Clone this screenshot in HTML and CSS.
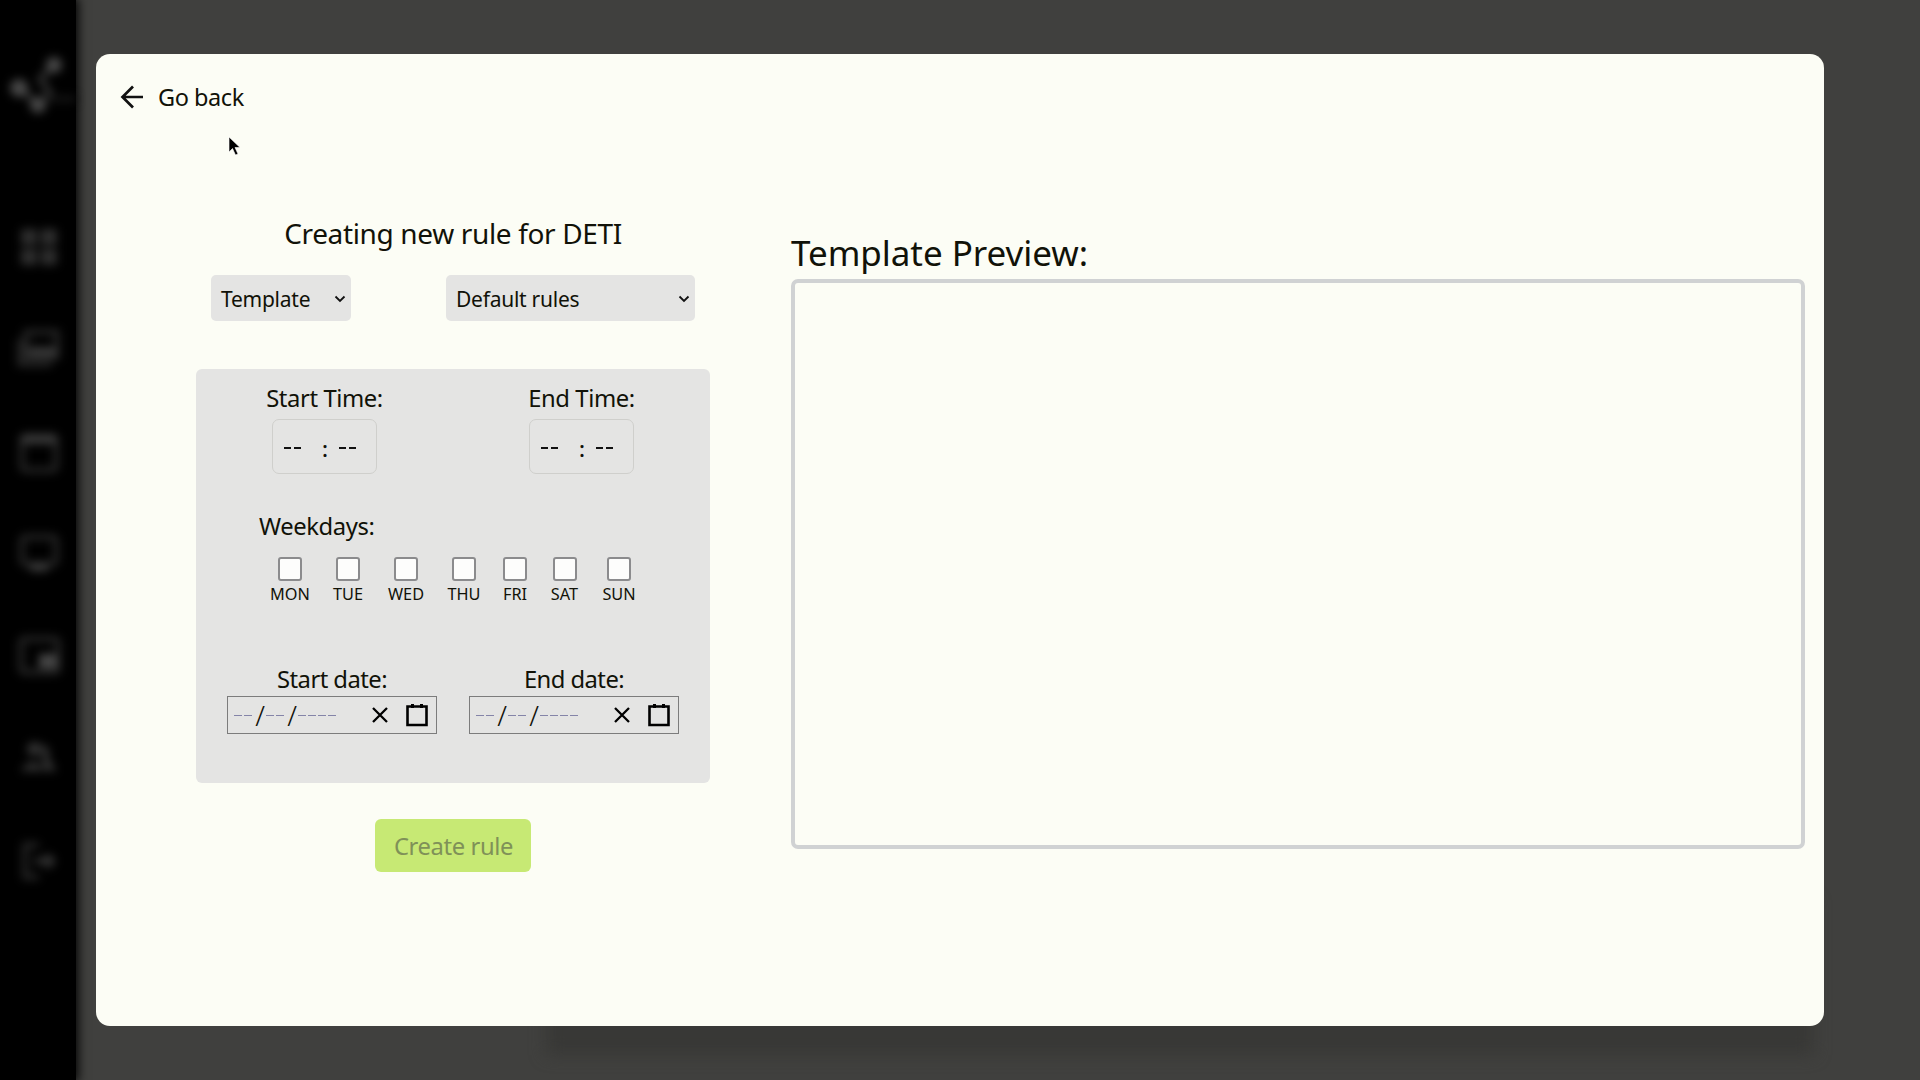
FILE: index.html
```html
<!DOCTYPE html>
<html lang="en">
<head>
<meta charset="utf-8">
<title>Create rule</title>
<link rel="stylesheet" href="styles.css">
</head>
<body>
<div class="app">
  <nav class="sidebar">
    <svg class="logo" viewBox="0 0 80 80"><g stroke="#303030" stroke-width="6"><path d="M20 37L38 54L50 42L40 28L54 14" fill="none"/><path d="M45 48H76" stroke="#151515"/></g><g fill="#484848"><circle cx="19" cy="37" r="9"/><circle cx="54" cy="14" r="8"/><circle cx="38" cy="54" r="8"/></g></svg>
    <svg class="nav-icon" viewBox="0 0 44 44"><path d="M4 4h16v16H4zM24 4h16v16H24zM4 24h16v16H4zM24 24h16v16H24z" fill="#2e2e2e"/></svg>
    <svg class="nav-icon" viewBox="0 0 44 44"><path d="M3 12v25h32M9 5h31v25H9z" fill="none" stroke="#2b2b2b" stroke-width="5"/><path d="M12 20h26v8H12z" fill="#3a3a3a"/></svg>
    <svg class="nav-icon" viewBox="0 0 44 44"><rect x="5" y="6" width="34" height="34" rx="3" fill="none" stroke="#2b2b2b" stroke-width="5"/><path d="M5 5h34v9H5z" fill="#3a3a3a"/></svg>
    <svg class="nav-icon" viewBox="0 0 44 44"><rect x="5" y="5" width="34" height="27" rx="3" fill="none" stroke="#2b2b2b" stroke-width="5"/><path d="M13 32h18v7H13z" fill="#404040"/></svg>
    <svg class="nav-icon" viewBox="0 0 44 44"><rect x="4" y="5" width="37" height="33" rx="3" fill="none" stroke="#2b2b2b" stroke-width="5"/><path d="M22 20h17v14H22z" fill="#484848"/></svg>
    <svg class="nav-icon" viewBox="0 0 44 44"><circle cx="17" cy="13" r="7" fill="#333"/><path d="M3 35q14-18 24 0zM24 8q12 4 7 13l9 14H27z" fill="#333"/></svg>
    <svg class="nav-icon" viewBox="0 0 44 44"><path d="M22 6H8v32h14" fill="none" stroke="#2b2b2b" stroke-width="5"/><path d="M18 19h12v-6l9 9-9 9v-6H18z" fill="#3a3a3a"/></svg>
  </nav>
  <main class="page">
    <div class="backdrop-card"></div>
    <section class="modal">
      <header class="back">
        <svg class="back-arrow" viewBox="0 0 24 24"><path d="M23 12H2.500M13 1.500L2.500 12L13 22.500" fill="none" stroke="#111" stroke-width="2.700"/></svg>
        <span>Go back</span>
      </header>
      <div class="content">
        <div class="form">
          <h1 class="form-title">Creating new rule for DETI</h1>
          <div class="selects">
            <div class="select select-template"><span>Template</span><svg class="chevron" viewBox="0 0 12 8"><path d="M1.500 1.500L6 6L10.500 1.500" fill="none" stroke="#111" stroke-width="1.800"/></svg></div>
            <div class="select select-rules"><span>Default rules</span><svg class="chevron" viewBox="0 0 12 8"><path d="M1.500 1.500L6 6L10.500 1.500" fill="none" stroke="#111" stroke-width="1.800"/></svg></div>
          </div>
          <div class="panel">
            <div class="times">
              <div class="time"><span class="label">Start Time:</span><div class="time-input"><i></i><i></i><b>:</b><i></i><i></i></div></div>
              <div class="time"><span class="label">End Time:</span><div class="time-input"><i></i><i></i><b>:</b><i></i><i></i></div></div>
            </div>
            <span class="label weekdays-label">Weekdays:</span>
            <div class="weekdays">
              <label class="day"><span class="box"></span>MON</label>
              <label class="day"><span class="box"></span>TUE</label>
              <label class="day"><span class="box"></span>WED</label>
              <label class="day"><span class="box"></span>THU</label>
              <label class="day"><span class="box"></span>FRI</label>
              <label class="day"><span class="box"></span>SAT</label>
              <label class="day"><span class="box"></span>SUN</label>
            </div>
            <div class="dates">
              <div class="date"><span class="label">Start date:</span>
                <div class="date-input"><i></i><i></i><b>/</b><i></i><i></i><b>/</b><i></i><i></i><i></i><i></i>
                  <svg class="clear" viewBox="0 0 16 16"><path d="M1 1L15 15M15 1L1 15" stroke="#000" stroke-width="2.300"/></svg>
                  <svg class="calendar" viewBox="0 0 22 24"><path d="M1.500 3.500h19v18.500h-19z" fill="none" stroke="#000" stroke-width="2.600"/><path d="M5 1h3v4H5zM14 1h3v4h-3z"/></svg></div></div>
              <div class="date"><span class="label">End date:</span>
                <div class="date-input"><i></i><i></i><b>/</b><i></i><i></i><b>/</b><i></i><i></i><i></i><i></i>
                  <svg class="clear" viewBox="0 0 16 16"><path d="M1 1L15 15M15 1L1 15" stroke="#000" stroke-width="2.300"/></svg>
                  <svg class="calendar" viewBox="0 0 22 24"><path d="M1.500 3.500h19v18.500h-19z" fill="none" stroke="#000" stroke-width="2.600"/><path d="M5 1h3v4H5zM14 1h3v4h-3z"/></svg></div></div>
            </div>
          </div>
          <div class="create">Create rule</div>
        </div>
        <div class="preview">
          <h2 class="preview-title">Template Preview:</h2>
          <div class="preview-frame"></div>
        </div>
      </div>
    </section>
  </main>
  <svg class="cursor" viewBox="0 0 14 20"><path d="M1 1V16L4.500 12.500L7.500 19L10 18L7 11.500H12z" fill="#000" stroke="#fff" stroke-width=".6"/></svg>
</div>
</body>
</html>
```
FILE: styles.css
```css
* { box-sizing: border-box; }
body { margin: 0; font-family: "Noto Sans", sans-serif; color: #111208; }
.app { position: relative; display: flex; width: 1920px; height: 1080px; overflow: hidden; background: #40403e; }
.sidebar { display: flex; flex-direction: column; width: 76px; padding-top: 51px; background: #000; box-shadow: 0 0 10px 2px #000; }
.logo { width: 80px; height: 80px; filter: blur(5px); }
.nav-icon { width: 44px; height: 44px; margin: 0 0 58.300px 17px; filter: blur(5px); }
.logo + .nav-icon { margin-top: 94px; }
.page { position: relative; padding: 54px 0 0 20px; }
.backdrop-card { position: absolute; left: 470px; top: 900px; width: 1268px; height: 155px; background: #383836; filter: blur(8px); }
.modal { position: relative; width: 1728px; height: 972px; padding-top: 23px; border-radius: 14px; background: #fcfdf5; }
.back { display: flex; align-items: center; height: 40px; padding-left: 24px; font-size: 23.500px; letter-spacing: -.45px; }
.back-arrow { width: 24px; height: 24px; margin-right: 14px; }
.content { display: flex; gap: 81px; padding-left: 100px; }
.form { display: flex; flex-direction: column; align-items: center; width: 514px; padding-top: 96px; }
.form-title { margin: 0; font-size: 28px; font-weight: 400; line-height: 40px; letter-spacing: -.35px; white-space: nowrap; }
.selects { display: flex; justify-content: space-between; width: 484px; margin-top: 22px; }
.select { display: flex; align-items: center; justify-content: space-between; height: 46px; padding: 2px 5px 0 10px; border-radius: 5px; background: #e4e4e3; font-size: 21px; letter-spacing: -.25px; }
.select-template { width: 140px; }
.select-rules { width: 249px; }
.chevron { width: 12px; height: 8px; }
.panel { width: 514px; height: 414px; margin-top: 48px; padding-top: 13px; border-radius: 6px; background: #e4e4e3; }
.label { font-size: 23.800px; line-height: 32px; letter-spacing: -.4px; white-space: nowrap; }
.times { display: flex; justify-content: space-between; padding: 0 70px; }
.time { display: flex; flex-direction: column; align-items: center; width: 117px; }
.time + .time { width: 105px; margin-right: 6px; }
.time-input { display: flex; align-items: center; width: 105px; height: 55px; margin-top: 5px; padding: 3px 0 0 11px; border: 1px solid #cfcfcc; border-radius: 7px; }
.time-input i { width: 7px; height: 2px; margin-right: 3px; background: #111; }
.time-input b { width: 8px; margin: 0 9px 0 18px; font-size: 22px; font-weight: 500; }
.weekdays-label { display: block; margin: 36px 0 0 63px; }
.weekdays { display: grid; grid-template-columns: 58px 58px 58px 58px 44px 55px 54px; margin: 15px 0 0 65px; }
.day { display: flex; flex-direction: column; align-items: center; font-size: 16.300px; line-height: 24px; }
.box { width: 24px; height: 24px; margin-bottom: 1px; border: 2px solid #8b8b8d; border-radius: 3px; background: #fdfdfc; }
.dates { display: flex; gap: 32px; margin: 57px 0 0 31px; }
.date { display: flex; flex-direction: column; align-items: center; width: 210px; }
.date .label { letter-spacing: -.55px; }
.date-input { display: flex; align-items: center; width: 210px; height: 38px; margin-top: 1px; padding-left: 6px; border: 1px solid #7c7c7c; }
.date-input i { width: 8px; height: 1px; margin-right: 2px; background: #8484a8; }
.date-input b { width: 12px; font-size: 28px; font-weight: 300; line-height: 30px; text-align: center; }
.clear { width: 16px; height: 16px; margin-left: 34px; }
.calendar { width: 22px; height: 24px; margin-left: 18px; }
.create { width: 156px; height: 53px; margin-top: 36px; padding-left: 1px; border-radius: 6px; background: #c7e974; color: #7f9158; font-size: 23.800px; letter-spacing: -.4px; line-height: 55px; text-align: center; }
.preview { width: 1014px; padding-top: 110px; }
.preview-title { margin: 0; font-size: 35px; font-weight: 400; line-height: 52px; letter-spacing: -.05px; }
.preview-frame { height: 570px; border: 4px solid #d0d2d3; border-radius: 7px; }
.cursor { position: absolute; left: 228px; top: 136px; width: 14px; height: 20px; }
```
